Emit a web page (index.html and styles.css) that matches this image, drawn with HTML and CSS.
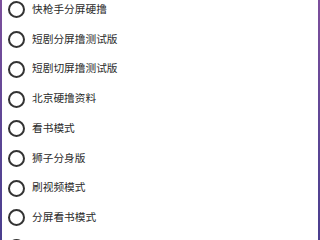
FILE: index.html
```html
<!DOCTYPE html>
<html lang="zh">
<head>
<meta charset="utf-8">
<link rel="stylesheet" href="styles.css">
</head>
<body>
<div class="frame">
  <ul class="options">
    <li class="option"><span class="radio"></span><span class="label">快枪手分屏硬撸</span></li>
    <li class="option"><span class="radio"></span><span class="label">短剧分屏撸测试版</span></li>
    <li class="option"><span class="radio"></span><span class="label">短剧切屏撸测试版</span></li>
    <li class="option"><span class="radio"></span><span class="label">北京硬撸资料</span></li>
    <li class="option"><span class="radio"></span><span class="label">看书模式</span></li>
    <li class="option"><span class="radio"></span><span class="label">狮子分身版</span></li>
    <li class="option"><span class="radio"></span><span class="label">刷视频模式</span></li>
    <li class="option"><span class="radio"></span><span class="label">分屏看书模式</span></li>
    <li class="option"><span class="radio"></span></li>
  </ul>
</div>
</body>
</html>
```
FILE: styles.css
```css
html, body {
  margin: 0;
  padding: 0;
  width: 320px;
  height: 240px;
  overflow: hidden;
  background: #ffffff;
}
.frame {
  width: 320px;
  height: 240px;
  box-sizing: border-box;
  border-left: 2px solid transparent;
  border-right: 2px solid transparent;
  border-image: linear-gradient(to bottom, #7d4f9c, #5a4594 60%, #4a3e8e) 1;
  overflow: hidden;
  background: #ffffff;
}
.options {
  list-style: none;
  margin: -5.4px 0 0 0;
  padding: 0 0 0 6px;
  font-family: "Noto Sans CJK SC", "Noto Sans", sans-serif;
}
.option {
  height: 29.7px;
  display: flex;
  align-items: center;
}
.radio {
  width: 17px;
  height: 17px;
  box-sizing: border-box;
  border: 2.2px solid #333333;
  border-radius: 50%;
  flex: none;
  margin-top: 1px;
}
.label {
  margin-left: 7px;
  font-size: 10.7px;
  color: #2a2a2a;
  line-height: 1;
}
```
